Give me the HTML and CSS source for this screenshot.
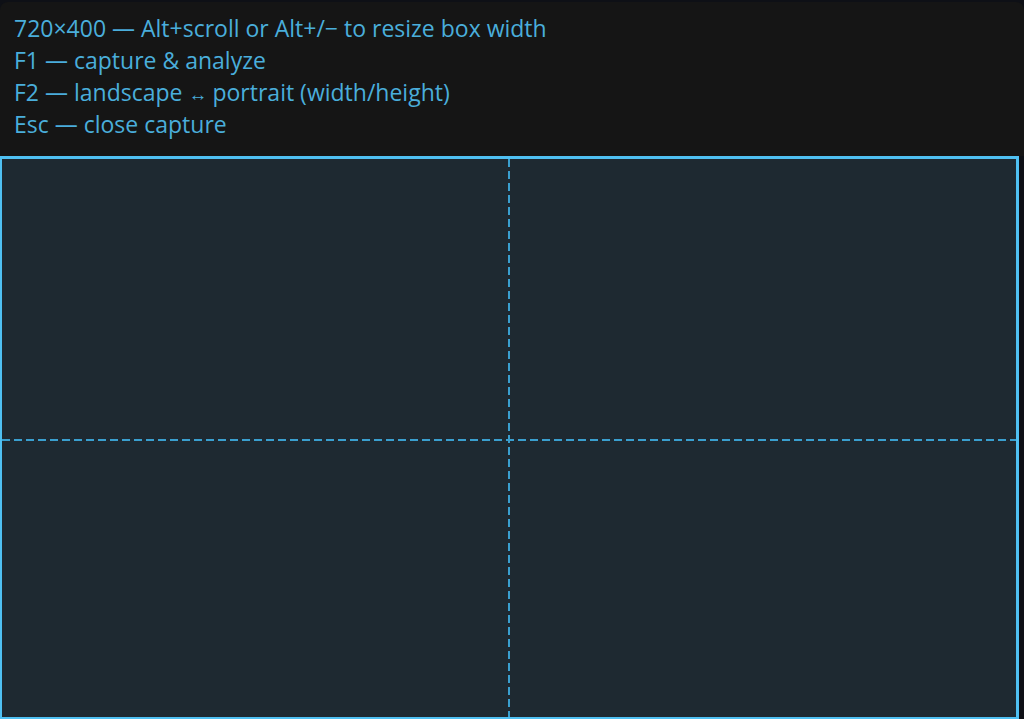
FILE: index.html
```html
<!DOCTYPE html>
<html>
<head>
<meta charset="utf-8">
<link rel="stylesheet" href="styles.css">
</head>
<body>
<div class="page">
  <div class="hud">
    <div class="line">720×400 — Alt+scroll or Alt+/− to resize box width</div>
    <div class="line">F1 — capture &amp; analyze</div>
    <div class="line">F2 — landscape <span class="arrow">↔</span> portrait (width/height)</div>
    <div class="line">Esc — close capture</div>
  </div>
  <div class="box">
    <div class="vline"></div>
    <div class="hline"></div>
  </div>
</div>
</body>
</html>
```
FILE: styles.css
```css
html, body {
  margin: 0;
  padding: 0;
  background: #0e1016;
  width: 1024px;
  height: 719px;
  overflow: hidden;
}
.page {
  padding-top: 2px;
  height: 717px;
  display: flex;
  flex-direction: column;
}
.hud {
  background: #151515;
  border-radius: 8px 8px 0 0;
  padding: 10px 14px 12px 14px;
  box-sizing: border-box;
  height: 154px;
  font-family: "Open Sans", "Noto Sans", sans-serif;
  font-size: 23px;
  line-height: 32px;
  color: #4aaedb;
  letter-spacing: 0;
}
.line {
  white-space: nowrap;
  height: 32px;
}
.arrow {
  font-size: 19px;
  line-height: 0;
  letter-spacing: -1px;
}
.box {
  position: relative;
  width: 1019px;
  flex: 1;
  box-sizing: border-box;
  border: 3px solid #4fc0f2;
  border-left-width: 2px;
  border-bottom-width: 2px;
  background: #1e2931;
}
.vline {
  position: absolute;
  left: 506px;
  top: 0;
  bottom: 0;
  width: 2px;
  background: repeating-linear-gradient(to bottom, #3a9fcf 0 8px, transparent 8px 12px);
}
.hline {
  position: absolute;
  top: 280px;
  left: 0;
  right: 0;
  height: 2px;
  background: repeating-linear-gradient(to right, #3a9fcf 0 8px, transparent 8px 12px);
}
```
